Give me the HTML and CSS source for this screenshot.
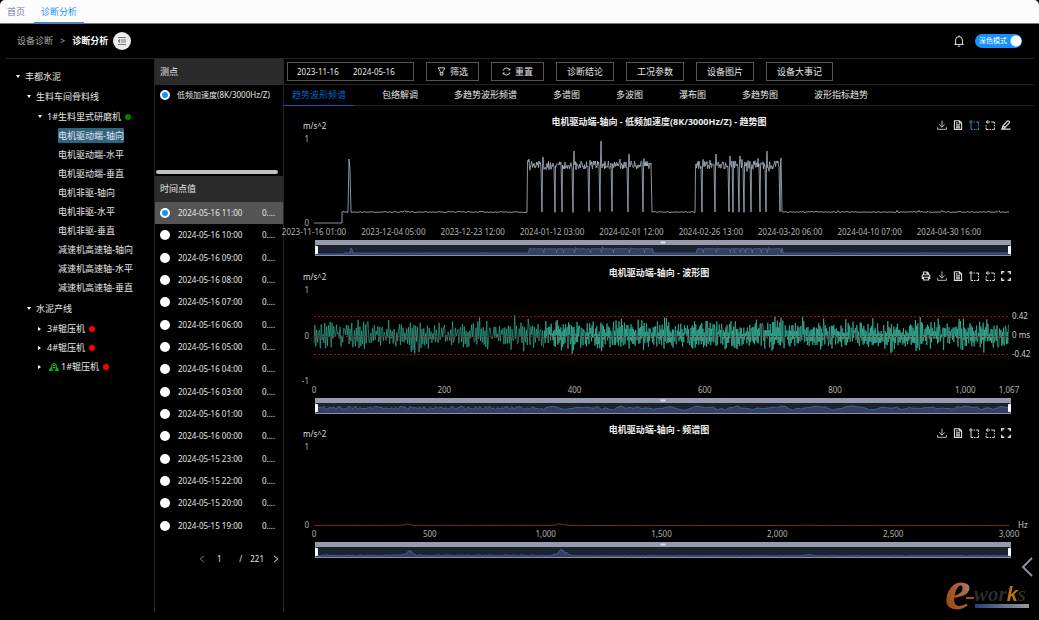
FILE: index.html
```
<!DOCTYPE html>
<html lang="zh-CN">
<head>
    <meta charset="UTF-8">
    <meta name="viewport" content="width=device-width, initial-scale=1.0">
    <title>诊断分析</title>
    <link rel="stylesheet" href="styles.css">
</head>
<body>
<svg class="sprite" width="0" height="0">
    <symbol id="i-print" viewBox="0 0 12 12"><path d="M3 4.5V1.2h4.5L9 2.7v1.8M3 9H1.5V5.5q0-1 1-1h7q1 0 1 1V9H9M3 7.5h6v3.3H3zM7.2 1.2V3H9" stroke-width="1.4"/></symbol>
    <symbol id="i-down" viewBox="0 0 12 12"><path d="M6 .6v8M2.6 5.2L6 8.6l3.4-3.4M.8 8.6v2.6h10.4V8.6"/></symbol>
    <symbol id="i-data" viewBox="0 0 12 12"><path d="M1.7.8h6l2.6 2.6v7.8H1.7zM7.5 1v2.6h2.6M3.5 5.6h5M3.5 7.4h5M3.5 9.2h5M3.5 3.4h2" stroke-width="1.3"/></symbol>
    <symbol id="i-zoom" viewBox="0 0 12 12"><path d="M0 2.4h4.4M2.4 0v11.4M5.6 2.4h1.8M8.6 2.4h2.8v2.2M11.4 5.8v1.8M11.4 9v2.4H9M7.8 11.4H6M4.8 11.4H2.4" stroke-width="1.2"/></symbol>
    <symbol id="i-back" viewBox="0 0 12 12"><path d="M3.8.2L1.6 2.4l2.2 2.2M1.6 2.4h4.4M7.4 2.4h3.8v2.2M11.2 5.8v1.8M11.2 9v2.4H8.8M7.4 11.4H5.6M4.2 11.4H1.4V9M1.4 7.8V6" stroke-width="1.2"/></symbol>
    <symbol id="i-full" viewBox="0 0 12 12"><path d="M.9 4V.9H4M8 .9h3.1V4M11.1 8v3.1H8M4 11.1H.9V8" stroke-width="1.7"/></symbol>
    <symbol id="i-edit" viewBox="0 0 12 12"><path d="M1.2 10.8L2.4 7 7.6 1.2q1-.7 2 .3t.3 2L4.8 9zM1 11h10.5M2.4 7l2.4 2" stroke-width="1.4"/></symbol>
</svg>

<nav class="topbar">
    <a href="#">首页</a>
    <a href="#" class="active">诊断分析</a>
</nav>

<header class="page-header">
    <a href="#">设备诊断</a>
    <span class="sep">&gt;</span>
    <strong>诊断分析</strong>
    <button class="fold" aria-label="收起菜单">
        <svg viewBox="0 0 10 10"><path d="M1 1.5h8M4 4h5M4 6h5M1 8.5h8M2.6 3.5L1 5l1.6 1.5z"/></svg>
    </button>
    <button class="bell" aria-label="通知">
        <svg viewBox="0 0 12 12"><path d="M2.6 9.4V5a3.4 3.4 0 0 1 6.8 0v4.4M1.4 9.4h9.2M6 .4v1.2M4.8 11.2h2.4"/></svg>
    </button>
    <label class="mode"><input type="checkbox" checked><span>深色模式</span></label>
</header>

<main class="layout">
    <aside class="tree">
        <ul>
            <li><button class="open">丰都水泥</button>
                <ul>
                    <li><button class="open">生料车间骨料线</button>
                        <ul>
                            <li><button class="open">1#生料里式研磨机<i class="dot ok"></i></button>
                                <ul class="leaves">
                                    <li><a href="#" class="selected">电机驱动端-轴向</a></li>
                                    <li><a href="#">电机驱动端-水平</a></li>
                                    <li><a href="#">电机驱动端-垂直</a></li>
                                    <li><a href="#">电机非驱-轴向</a></li>
                                    <li><a href="#">电机非驱-水平</a></li>
                                    <li><a href="#">电机非驱-垂直</a></li>
                                    <li><a href="#">减速机高速轴-轴向</a></li>
                                    <li><a href="#">减速机高速轴-水平</a></li>
                                    <li><a href="#">减速机高速轴-垂直</a></li>
                                </ul>
                            </li>
                        </ul>
                    </li>
                    <li><button class="open">水泥产线</button>
                        <ul>
                            <li><button>3#辊压机<i class="dot"></i></button></li>
                            <li><button>4#辊压机<i class="dot"></i></button></li>
                            <li><button><svg class="machine" viewBox="0 0 10 8"><path d="M0 7.3h4M6 7.3h4M1.2 7V5h1.4M8.8 7V5H7.4M2.8 7V2.2Q2.8.8 5 .8t2.2 1.4V7M3.8 4.6h2.4M4 2.4h2"/></svg>1#辊压机<i class="dot"></i></button></li>
                        </ul>
                    </li>
                </ul>
            </li>
        </ul>
    </aside>

    <section class="points">
        <h2>测点</h2>
        <div class="sensor-list">
            <label><input type="radio" name="sensor" checked>低频加速度(8K/3000Hz/Z)</label>
            <div class="scrollbar"></div>
        </div>
        <h2>时间点值</h2>
        <table class="times">
            <tbody id="times"></tbody>
        </table>
        <div class="pager">
            <button disabled aria-label="上一页"><svg viewBox="0 0 6 8"><path d="M5 .8L1.2 4 5 7.2"/></svg></button>
            <input type="text" value="1" aria-label="页码">
            <span class="slash">/</span>
            <span>221</span>
            <button aria-label="下一页"><svg viewBox="0 0 6 8"><path d="M1 .8L4.8 4 1 7.2"/></svg></button>
        </div>
    </section>

    <section class="content">
        <div class="toolbar">
            <div class="range">
                <input type="text" value="2023-11-16" aria-label="开始日期">
                <input type="text" value="2024-05-16" aria-label="结束日期">
            </div>
            <button><svg viewBox="0 0 10 10"><path d="M1.2 1h7.6L6.4 5v4H3.6V5zM3.6 6.4h2.8"/></svg>筛选</button>
            <button><svg viewBox="0 0 10 10"><path d="M1.2 4A4 4 0 0 1 8.6 3.2M8.8 6A4 4 0 0 1 1.4 6.8M8.8 1.6v1.8H7M1.2 8.4V6.6H3"/></svg>重置</button>
            <button>诊断结论</button>
            <button>工况参数</button>
            <button>设备图片</button>
            <button>设备大事记</button>
        </div>
        <nav class="tabs">
            <a href="#" class="active">趋势波形频谱</a>
            <a href="#">包络解调</a>
            <a href="#">多趋势波形频谱</a>
            <a href="#">多谱图</a>
            <a href="#">多波图</a>
            <a href="#">瀑布图</a>
            <a href="#">多趋势图</a>
            <a href="#">波形指标趋势</a>
        </nav>

        <article class="chart trend">
            <header>
                <span class="unit">m/s^2</span>
                <h3>电机驱动端-轴向 - 低频加速度(8K/3000Hz/Z) - 趋势图</h3>
                <div class="tools">
                    <button aria-label="下载"><svg><use href="#i-down"/></svg></button>
                    <button aria-label="数据"><svg><use href="#i-data"/></svg></button>
                    <button aria-label="缩放" class="on"><svg><use href="#i-zoom"/></svg></button>
                    <button aria-label="还原"><svg><use href="#i-back"/></svg></button>
                    <button aria-label="标注"><svg><use href="#i-edit"/></svg></button>
                </div>
            </header>
            <div class="plot-row">
                <div class="y-axis"><span>1</span><span>0</span></div>
                <svg class="plot" id="trend" viewBox="0 0 695 84" preserveAspectRatio="none"></svg>
            </div>
            <div class="x-axis" id="trend-axis"></div>
            <div class="slider"><svg id="trend-slider" viewBox="0 0 695 10" preserveAspectRatio="none"></svg></div>
        </article>

        <article class="chart wave">
            <header>
                <span class="unit">m/s^2</span>
                <h3>电机驱动端-轴向 - 波形图</h3>
                <div class="tools">
                    <button aria-label="打印"><svg><use href="#i-print"/></svg></button>
                    <button aria-label="下载"><svg><use href="#i-down"/></svg></button>
                    <button aria-label="数据"><svg><use href="#i-data"/></svg></button>
                    <button aria-label="缩放"><svg><use href="#i-zoom"/></svg></button>
                    <button aria-label="还原"><svg><use href="#i-back"/></svg></button>
                    <button aria-label="全屏"><svg><use href="#i-full"/></svg></button>
                </div>
            </header>
            <div class="plot-row">
                <div class="y-axis"><span>1</span><span>0</span><span>-1</span></div>
                <svg class="plot" id="wave" viewBox="0 0 695 91" preserveAspectRatio="none"></svg>
                <div class="marks"><span>0.42</span><span>0 ms</span><span>-0.42</span></div>
            </div>
            <div class="x-axis" id="wave-axis"></div>
            <div class="slider"><svg id="wave-slider" viewBox="0 0 695 10" preserveAspectRatio="none"></svg></div>
        </article>

        <article class="chart spectrum">
            <header>
                <span class="unit">m/s^2</span>
                <h3>电机驱动端-轴向 - 频谱图</h3>
                <div class="tools">
                    <button aria-label="下载"><svg><use href="#i-down"/></svg></button>
                    <button aria-label="数据"><svg><use href="#i-data"/></svg></button>
                    <button aria-label="缩放"><svg><use href="#i-zoom"/></svg></button>
                    <button aria-label="还原"><svg><use href="#i-back"/></svg></button>
                    <button aria-label="全屏"><svg><use href="#i-full"/></svg></button>
                </div>
            </header>
            <div class="plot-row">
                <div class="y-axis"><span>1</span><span>0</span></div>
                <svg class="plot" id="spectrum" viewBox="0 0 695 78" preserveAspectRatio="none"></svg>
                <div class="marks end"><span>Hz</span></div>
            </div>
            <div class="x-axis" id="spectrum-axis"></div>
            <div class="slider"><svg id="spectrum-slider" viewBox="0 0 695 10" preserveAspectRatio="none"></svg></div>
        </article>
    </section>
</main>

<button class="drawer" aria-label="展开"><svg viewBox="0 0 12 20"><path d="M11 1L2 10l9 9"/></svg></button>

<svg class="logo" viewBox="0 0 96 72">
    <defs>
        <linearGradient id="g-e" x1="0" y1="1" x2="1" y2="0">
            <stop offset="0.2" stop-color="#a04a10"/><stop offset="0.6" stop-color="#a86848"/><stop offset="1" stop-color="#a8a8a8"/>
        </linearGradient>
        <linearGradient id="g-bar"><stop offset="0" stop-color="#25427f"/><stop offset="1" stop-color="#999"/></linearGradient>
    </defs>
    <text class="logo-e" x="2" y="57" fill="url(#g-e)">e</text>
    <rect x="23" y="45" width="8" height="2" fill="#b04a10"/>
    <text class="logo-name" x="31" y="49">wor<tspan class="logo-k">k</tspan>s</text>
    <rect x="32" y="52" width="54" height="4" fill="url(#g-bar)"/>
</svg>

<script src="script.js"></script>
</body>
</html>
```
FILE: styles.css
```
:root {
    --blue: #1890ff;
    --line: #242424;
    --text: #e6e6e6;
    --panel: #2b2b2b;
}

* {
    margin: 0;
    padding: 0;
    box-sizing: border-box;
}

body {
    font-family: "Noto Sans", "Noto Sans CJK SC", sans-serif;
    font-size: 8px;
    line-height: 12px;
    color: var(--text);
    background: #000;
    min-height: 100vh;
    display: flex;
    flex-direction: column;
}

a {
    color: inherit;
    text-decoration: none;
}

button {
    font: inherit;
    color: inherit;
    background: none;
    border: none;
    cursor: pointer;
}

input {
    font: inherit;
    color: inherit;
    background: none;
    border: none;
    outline: none;
}

svg {
    display: block;
    fill: none;
    stroke: currentColor;
}

ul {
    list-style: none;
}

.sprite {
    position: absolute;
}

/* top tabs */
.topbar {
    display: flex;
    gap: 2px;
    height: 24px;
    background: #fcfcfc;
    border-bottom: 1px solid #777;
    border-radius: 5px 5px 0 0;
    color: #7a7f99;
    font-size: 9px;
}

.topbar a {
    padding: 0 7px;
    line-height: 24px;
}

.topbar a.active {
    color: var(--blue);
    border-bottom: 1px solid var(--blue);
}

/* breadcrumb */
.page-header {
    display: flex;
    align-items: center;
    height: 35px;
    margin: 0 5px;
    padding: 0 12px;
    border-bottom: 1px solid var(--line);
    font-size: 9px;
}

.page-header > a {
    color: #aaa;
}

.page-header .sep {
    margin: 0 7px;
    color: #aaa;
}

.page-header strong {
    color: #fff;
}

.fold {
    width: 18px;
    height: 18px;
    margin-left: 5px;
    padding: 4px;
    border-radius: 50%;
    background: #ececec;
    color: #777;
}

.bell {
    width: 12px;
    margin-left: auto;
}

.mode {
    position: relative;
    margin-left: 10px;
    color: #fff;
    font-size: 7px;
}

.mode input {
    display: block;
    appearance: none;
    width: 47px;
    height: 14px;
    border-radius: 7px;
    background: radial-gradient(circle at 41px 7px, #fff 5px, transparent 6px), var(--blue);
}

.mode span {
    position: absolute;
    left: 4px;
    top: 1px;
}

.layout {
    flex: 1;
    display: grid;
    grid-template-columns: 150px 129px minmax(0, 1fr);
    margin: 0 5px 8px;
}

/* equipment tree */
.tree {
    border-right: 1px solid var(--line);
    padding: 8px 0 0 10px;
    font-size: 9px;
}

.tree li li {
    padding-left: 11px;
}

.tree button,
.tree li a {
    display: flex;
    align-items: center;
    height: 19px;
    line-height: 14px;
    white-space: nowrap;
}

.tree button::before {
    content: "";
    margin: 0 6px 0 1px;
    border-left: 3px solid #fff;
    border-top: 2px solid transparent;
    border-bottom: 2px solid transparent;
}

.tree button.open::before {
    margin: 0 5px 0 1px;
    border-left: 2px solid transparent;
    border-right: 2px solid transparent;
    border-top: 3px solid #fff;
    border-bottom: none;
}

.tree ul ul {
    padding-top: 1px;
}

.tree .leaves {
    padding-top: 0;
}

.leaves li a {
    width: fit-content;
    height: 15px;
    margin: 2px 0 4px 10px;
}

.leaves a.selected {
    background: #2f6480;
    border-radius: 1px;
}

.dot {
    width: 6px;
    height: 6px;
    margin-left: 4px;
    border-radius: 50%;
    background: #f00;
}

.dot.ok {
    background: #008000;
}

.machine {
    width: 10px;
    height: 8px;
    margin: 0 2px;
    color: #00e020;
}

/* sensors and time points */
.points {
    border-right: 1px solid var(--line);
}

.points h2 {
    padding-left: 5px;
    font-size: 9px;
    font-weight: normal;
    line-height: 26px;
    background: var(--panel);
}

input[type="radio"] {
    appearance: none;
    flex: none;
    display: block;
    width: 10px;
    height: 10px;
    border-radius: 50%;
    background: #fff;
}

input[type="radio"]:checked {
    background: var(--blue);
    border: 2px solid #fff;
}

.sensor-list {
    display: flex;
    flex-direction: column;
    justify-content: space-between;
    height: 91px;
    padding: 4px 5px 2px 1px;
}

.sensor-list label {
    display: flex;
    align-items: center;
    gap: 7px;
    padding-left: 4px;
    white-space: nowrap;
}

.scrollbar {
    height: 4px;
    border-radius: 2px;
    background: #c1c1c1;
}

.times {
    width: 100%;
    height: 335px;
    border-collapse: collapse;
    table-layout: fixed;
}

.times td {
    vertical-align: middle;
    white-space: nowrap;
}

.times td:first-child {
    width: 23px;
    padding-left: 5px;
}

.times td:last-child {
    width: 21px;
}

.times tr.current {
    background: #555;
}

.pager {
    display: flex;
    align-items: center;
    justify-content: flex-end;
    padding: 16px 4px 0 0;
}

.pager button {
    width: 6px;
}

.pager button:disabled {
    color: #777;
}

.pager input {
    width: 26px;
    margin-left: 1px;
    text-align: center;
}

.pager .slash {
    margin: 0 8px 0 7px;
}

.pager span + button {
    margin-left: 9px;
}

/* toolbar */
.toolbar {
    display: flex;
    gap: 12px;
    padding: 3px;
    border-bottom: 1px solid var(--line);
}

.range {
    display: flex;
    align-items: center;
    gap: 12px;
    width: 127px;
    padding: 0 9px;
    border: 1px solid #555;
}

.range input {
    width: 44px;
}

.toolbar button {
    display: flex;
    align-items: center;
    gap: 4px;
    height: 19px;
    padding: 0 10px;
    border: 1px solid #555;
    font-size: 9px;
}

.toolbar svg {
    width: 9px;
    height: 9px;
}

.tabs {
    display: flex;
    gap: 20px;
    font-size: 9px;
    line-height: 20px;
    border-bottom: 1px solid var(--line);
}

.tabs a {
    padding: 0 8px;
}

.tabs a.active {
    color: #0a60c0;
    box-shadow: 0 1px #0a60c0;
}

/* charts */
.chart {
    color: #b0b0b0;
}

.chart header {
    display: grid;
    grid-template-columns: 1fr auto 1fr;
    height: 33px;
    color: #ddd;
}

.unit {
    padding: 14px 0 0 19px;
}

.chart h3 {
    margin-top: 10px;
    font-size: 9px;
    color: #eee;
}

.tools {
    display: flex;
    justify-content: flex-end;
    gap: 6px;
    padding: 14px 23px 0 0;
}

.tools button,
.tools svg {
    width: 10px;
    height: 10px;
}

.tools .on {
    color: #3288b4;
}

.plot-row {
    display: flex;
    margin: 0 0 0 30px;
    position: relative;
    padding-right: 25px;
}

.y-axis {
    display: flex;
    flex-direction: column;
    justify-content: space-between;
    width: 30px;
    margin: -6px 0 -6px -30px;
    padding-right: 5px;
    text-align: right;
}

.plot {
    flex: 1;
    min-width: 0;
    overflow: visible;
}

.plot path,
.slider path {
    vector-effect: non-scaling-stroke;
}

.trend .plot {
    height: 84px;
    color: #a9b9c9;
}

.wave .plot {
    height: 91px;
    color: #38bfa3;
}

.spectrum .plot {
    height: 78px;
    color: #a04e14;
}

.limit {
    stroke: #c00000;
    stroke-dasharray: 2 2;
}

.marks {
    display: flex;
    flex-direction: column;
    gap: 7px;
    width: 25px;
    margin-right: -25px;
    padding: 20px 0 0 3px;
    white-space: nowrap;
    color: #ccc;
}

.marks.end {
    justify-content: flex-end;
    margin-bottom: -6px;
    padding-left: 9px;
}

.x-axis {
    position: relative;
    height: 17px;
    margin: 0 25px 0 30px;
}

.x-axis span {
    position: absolute;
    top: 3px;
    width: 80px;
    margin-left: -40px;
    text-align: center;
}

.slider {
    position: relative;
    height: 16px;
    margin: 0 23px 0 31px;
    border: 1px solid #8392b0;
    border-top: 5px solid #979cab;
    background: #1b2232;
    color: #5873aa;
}

.trend .slider {
    margin-bottom: 1px;
}

.slider svg {
    width: 100%;
    height: 10px;
    overflow: visible;
}

.slider::before,
.slider::after {
    content: "";
    position: absolute;
    top: 1px;
    width: 3px;
    height: 8px;
    border-radius: 1px;
    background: #fff;
}

.slider::before {
    left: -1px;
}

.slider::after {
    right: -1px;
}

.drawer {
    position: fixed;
    right: 6px;
    bottom: 43px;
    width: 12px;
    color: #8b90a0;
}

.drawer path {
    stroke-width: 2;
}

.logo {
    position: fixed;
    right: 0;
    bottom: -4px;
    width: 96px;
    height: 72px;
    stroke: none;
    pointer-events: none;
}

.logo-e {
    font: italic bold 58px "Liberation Serif", serif;
}

.logo-name {
    font: italic bold 21px "Liberation Serif", serif;
    fill: #2c2c2c;
}

.logo-k {
    font: italic bold 20px "Liberation Sans", sans-serif;
    fill: #b87408;
}
```
FILE: script.js
```
let seed = 7;

function rand() {
    seed = (seed * 16807) % 2147483647;
    return seed / 2147483647;
}

function noise(size) {
    return (rand() - 0.5) * 2 * size;
}

function line(points) {
    return 'M' + points.map(p => p[0].toFixed(1) + ' ' + p[1].toFixed(1)).join('L');
}

function draw(id, html) {
    document.getElementById(id).innerHTML = html;
}

function drawSlider(id, points) {
    draw(id, `<path d="${line(points)}L695 10L0 10Z" fill="#33415f" stroke="none"/>
        <path d="${line(points)}" stroke-width="0.7"/>
        <path d="M345 -2.5h5" stroke="#dde" stroke-width="2"/>`);
}

function drawAxis(id, ticks) {
    draw(id, ticks.map(t => `<span style="left: ${t[1]}%">${t[0]}</span>`).join(''));
}

// time points
const times = ['16 11', '16 10', '16 09', '16 08', '16 07', '16 06', '16 05', '16 04', '16 03',
    '16 01', '16 00', '15 23', '15 22', '15 20', '15 19'];
draw('times', times.map((t, i) => `<tr${i ? '' : ' class="current"'}>
    <td><input type="radio" name="time" id="t${i}"${i ? '' : ' checked'}></td>
    <td><label for="t${i}">2024-05-${t}:00</label></td><td>0....</td></tr>`).join(''));

// trend: machine is running in two periods, with short stops and peaks
const runs = [[214, 338], [382, 468]];
const stops = [228, 241, 248, 259, 275, 286, 298, 314, 329, 388, 401, 415, 419, 425, 430, 437, 446, 452, 466];
const peaks = { 215: 20, 229: 18, 260: 12, 287: 2, 315: 15, 402: 15, 416: 17, 426: 17, 453: 12, 467: 19 };

function trendPoints() {
    const points = [[0, 84], [28, 84], [28, 73]];
    for (let x = 29; x <= 695; x++) {
        const running = runs.some(r => x >= r[0] && x < r[1]);
        let y = 73 + noise(0.5);
        if (x === 35) y = 20;
        if (x === 36) y = 31;
        if (rand() > 0.96) y -= 1.2;
        if (running && !stops.includes(x)) {
            y = peaks[x] || 26 + noise(rand() > 0.7 ? 7 : 4);
            points.push([x - 0.5, 26 + noise(4)]);
        }
        points.push([x, y]);
    }
    return points;
}

const trend = trendPoints();
draw('trend', `<path d="${line(trend)}" stroke-width="0.8"/>`);
drawSlider('trend-slider', trend.map(p => [p[0], 9 - (84 - p[1]) / 11]));
drawAxis('trend-axis', ['2023-11-16 01:00', '2023-12-04 05:00', '2023-12-23 12:00', '2024-01-12 03:00',
    '2024-02-01 12:00', '2024-02-26 13:00', '2024-03-20 06:00', '2024-04-10 07:00', '2024-04-30 16:00']
    .map((t, i) => [t, i * 11.42]));

// waveform
function wavePoints(from, to, step) {
    const points = [];
    let up = 1;
    for (let x = from; x <= to; x += step) {
        const swell = 0.85 + 0.25 * Math.sin(x / 5) * Math.sin(x / 13);
        const size = (3 + rand() * (rand() > 0.95 ? 17 : 12)) * swell;
        points.push([x, 45 + up * size + noise(4)]);
        up = rand() > 0.1 ? -up : up;
    }
    return points;
}

draw('wave', `<path d="${line(wavePoints(0, 230, 0.9))}" stroke-width="0.6"/>
    <path d="${line(wavePoints(230, 695, 0.6))}" stroke-width="0.7"/>
    <path class="limit" d="M0 26.5H695"/>
    <path class="limit" d="M0 46.5H695"/>
    <path class="limit" d="M0 64.5H695"/>`);
const shadow = [];
for (let x = 0; x <= 695; x += x < 230 ? 2 : 4) {
    shadow.push([x, 5 + noise(x < 230 ? 1.8 : 1.4) - (x < 230 ? 0 : Math.sin(x / 6))]);
}
drawSlider('wave-slider', shadow);
drawAxis('wave-axis', [0, 200, 400, 600, 800, 1000, 1067].map(v => [v.toLocaleString('en-US'), v / 10.67]));

// spectrum
const spectrum = [];
for (let x = 0; x <= 695; x++) {
    const peak = 5 * Math.exp(-((x - 93) ** 2) / 20) + 6 * Math.exp(-((x - 246) ** 2) / 40)
        + 1.2 * Math.exp(-((x - 493) ** 2) / 30);
    const base = x < 230 ? 1 : 0.4;
    spectrum.push([x, peak * (0.4 + rand() * 0.7) + rand() * base]);
}
draw('spectrum', `<path d="${line(spectrum.map(p => [p[0], 78.5 - p[1] * 0.3]))}" stroke-width="0.7"/>`);
drawSlider('spectrum-slider', spectrum.map(p => [p[0], 9 - p[1] * 1.2]));
drawAxis('spectrum-axis', [0, 500, 1000, 1500, 2000, 2500, 3000].map(v => [v.toLocaleString('en-US'), v / 30]));
```
